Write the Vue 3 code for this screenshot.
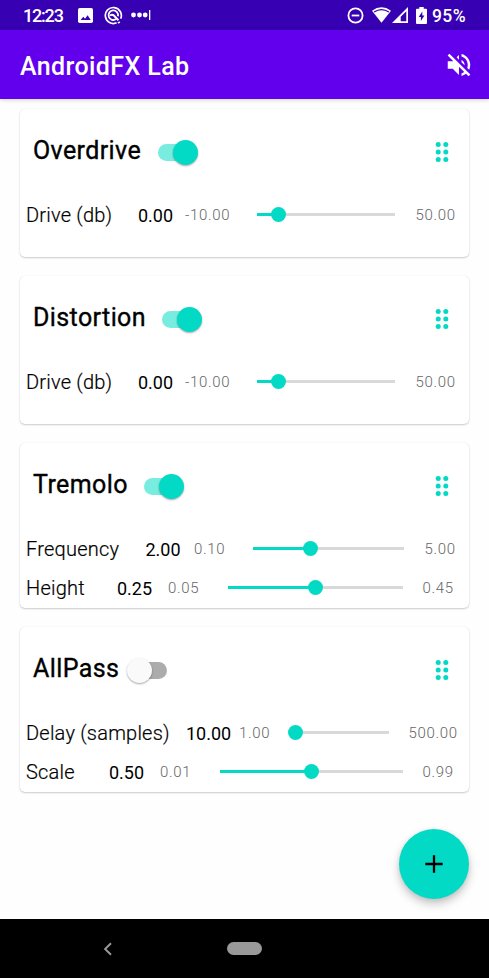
<script setup>
import { reactive } from 'vue'

const effects = reactive([
  {
    name: 'Overdrive', on: true,
    params: [{ label: 'Drive (db)', value: '0.00', min: '-10.00', max: '50.00', cols: [118, 47, 72, 138, 20.5], fill: 15.8 }]
  },
  {
    name: 'Distortion', on: true,
    params: [{ label: 'Drive (db)', value: '0.00', min: '-10.00', max: '50.00', cols: [118, 47, 72, 138, 20.5], fill: 15.8 }]
  },
  {
    name: 'Tremolo', on: true,
    params: [
      { label: 'Frequency', value: '2.00', min: '0.10', max: '5.00', cols: [125.5, 48.5, 59, 151, 20.5], fill: 37.8 },
      { label: 'Height', value: '0.25', min: '0.05', max: '0.45', cols: [97, 51, 60, 174.5, 20], fill: 50 }
    ]
  },
  {
    name: 'AllPass', on: false,
    params: [
      { label: 'Delay (samples)', value: '10.00', min: '1.00', max: '500.00', cols: [166, 53, 56.5, 93, 20], fill: 0 },
      { label: 'Scale', value: '0.50', min: '0.01', max: '0.99', cols: [89, 51, 60, 182.5, 20], fill: 50 }
    ]
  }
])

const dots = [4.5, 12, 19.5]

function columns(p) {
  return p.cols.map((c) => c + 'px').join(' ') + ' 1fr'
}
</script>

<template>
  <div class="screen">
    <div class="status">
      <span class="clock">12:23</span>
      <svg class="picture" width="15" height="15" viewBox="0 0 15 15">
        <rect width="15" height="15" rx="1.8" fill="#fff" />
        <path d="M2.6 12 5.3 8.7 7 10.8 9.6 7.3 12.8 12Z" fill="#3700b3" />
      </svg>
      <svg class="round-logo" width="19" height="19" viewBox="0 0 19 19" fill="none" stroke="#fff">
        <path d="M16.7 12.6A8 8 0 1 0 12.6 16.8" stroke-width="1.7" />
        <path d="M12.1 13.1A4.8 4.8 0 1 1 14 10.2" stroke-width="1.8" />
        <path d="M6 9.8C7 8.2 8.9 8.5 9.9 9.5L14.4 14.2" stroke-width="2" />
        <path d="M14 17.2 15.8 15.8" stroke-width="1.6" />
      </svg>
      <svg class="more" width="20" height="12" viewBox="0 0 20 12" fill="#fff">
        <circle cx="2.5" cy="6" r="2.4" /><circle cx="8.5" cy="6" r="2.4" /><circle cx="14.2" cy="6" r="2.4" />
        <rect x="18" y="1" width="1.3" height="10" />
      </svg>
      <span class="spacer"></span>
      <svg class="dnd" width="17" height="17" viewBox="0 0 17 17" fill="none" stroke="#fff" stroke-width="1.8">
        <circle cx="8.5" cy="8.5" r="7.1" /><path d="M4.7 8.5h7.6" />
      </svg>
      <svg class="wifi" width="19" height="16" viewBox="0 0 19 16">
        <path d="M0 3.7Q9.5-3.2 19 3.7L9.5 15.8Z" fill="#fff" />
        <path d="M2.1 5.1Q9.5 0 16.9 5.1" fill="none" stroke="#3700b3" stroke-width="1.2" />
      </svg>
      <svg class="signal" width="16" height="16" viewBox="0 0 16 16">
        <path d="M16 0V16H0ZM14.3 4.2 8.7 9.8V14.3H14.3Z" fill="#fff" fill-rule="evenodd" />
      </svg>
      <svg class="battery" width="11" height="17" viewBox="0 0 11 17">
        <path d="M3.3 0h4.4v1.8H10a1 1 0 0 1 1 1V16a1 1 0 0 1-1 1H1a1 1 0 0 1-1-1V2.8a1 1 0 0 1 1-1h2.3Z" fill="#fff" />
        <path d="M6.3 4.5 2.7 10h2.2v4l3.5-5.4H6.3Z" fill="#3700b3" />
      </svg>
      <span class="percent">95%</span>
    </div>

    <header class="app-bar">
      <h1>AndroidFX Lab</h1>
      <svg width="30" height="30" viewBox="0 0 24 24" fill="#fff">
        <path d="M4.34 2.93 2.93 4.34 7.29 8.7 7 9H3v6h4l5 5v-6.59l4.18 4.18c-.65.49-1.38.88-2.18 1.11v2.06c1.34-.3 2.57-.92 3.61-1.75l2.05 2.05 1.41-1.41L4.34 2.93zM19 12c0 .82-.15 1.61-.41 2.34l1.53 1.53c.56-1.17.88-2.48.88-3.87 0-4.28-2.99-7.86-7-8.77v2.06c2.89.86 5 3.54 5 6.71zM12 4l-1.88 1.88L12 7.76V4zm4.5 8c0-1.77-1.02-3.29-2.5-4.03v1.79l2.48 2.48c.01-.08.02-.16.02-.24z" />
      </svg>
    </header>

    <main class="effects">
      <section v-for="fx in effects" :key="fx.name" class="card">
        <div class="card-head">
          <h2>{{ fx.name }}</h2>
          <button class="switch" :class="{ on: fx.on }" role="switch" :aria-checked="fx.on" @click="fx.on = !fx.on">
            <span class="groove"></span>
            <span class="knob"></span>
          </button>
          <svg class="handle" width="16" height="24" viewBox="0 0 16 24" fill="#03dac5">
            <template v-for="y in dots" :key="y">
              <circle cx="4.2" :cy="y" r="2.5" /><circle cx="11.8" :cy="y" r="2.5" />
            </template>
          </svg>
        </div>
        <div v-for="p in fx.params" :key="p.label" class="param" :style="{ gridTemplateColumns: columns(p) }">
          <span class="label">{{ p.label }}</span>
          <span class="value">{{ p.value }}</span>
          <span class="bound">{{ p.min }}</span>
          <div class="slider">
            <div class="progress" :style="{ width: p.fill + '%' }"></div>
            <div class="thumb"></div>
            <div class="rest"></div>
          </div>
          <span></span>
          <span class="bound">{{ p.max }}</span>
        </div>
      </section>
    </main>

    <div class="fab-row">
      <button class="fab" aria-label="Add">
        <svg width="18" height="18" viewBox="0 0 18 18" stroke="#000" stroke-width="2.3"><path d="M9 .3v17.4M.3 9h17.4" /></svg>
      </button>
    </div>

    <nav class="nav-bar">
      <svg class="back" width="10" height="14" viewBox="0 0 10 14" fill="none" stroke="#999" stroke-width="1.9"><path d="M8 1.3 2.1 7 8 12.7" /></svg>
      <span class="home"></span>
    </nav>
  </div>
</template>

<style>
body { margin: 0; background: #fff; }
</style>

<style scoped>
.screen {
  width: 489px;
  height: 978px;
  display: flex;
  flex-direction: column;
  overflow: hidden;
  background: #fefefe;
  font-family: Roboto, sans-serif;
  color: #000;
}
button { border: 0; padding: 0; }
svg { display: block; flex: none; }
.status {
  height: 30px;
  flex: none;
  display: flex;
  align-items: center;
  box-sizing: border-box;
  padding: 0 22px 0 23px;
  background: #3700b3;
  color: #fff;
}
.clock, .percent { font-size: 17.5px; font-weight: 500; line-height: 30px; padding-top: 2px; }
.clock { width: 55px; letter-spacing: -1.2px; font-size: 18px; }
.round-logo { margin-left: 11px; }
.more { margin-left: 8px; }
.spacer { flex: 1; }
.dnd { margin-right: 8px; }
.wifi { margin-right: 1px; }
.signal { margin-right: 8px; }
.battery { margin-right: 5px; }
.percent { width: 35px; white-space: nowrap; letter-spacing: .4px; }
.app-bar {
  height: 69px;
  flex: none;
  display: flex;
  align-items: center;
  justify-content: space-between;
  box-sizing: border-box;
  padding: 4px 15px 0 20px;
  background: #6200ee;
  color: #fff;
  box-shadow: 0 1px 4px rgba(0, 0, 0, .18);
}
.app-bar svg { margin-bottom: 3px; }
h1 { margin: 0; font-size: 25px; font-weight: 500; letter-spacing: .4px; }
.effects {
  display: flex;
  flex-direction: column;
  gap: 19px;
  padding: 10px 20px 0;
}
.card {
  height: 148px;
  box-sizing: border-box;
  border-radius: 5px;
  background: #fff;
  box-shadow: 0 1px 2px rgba(0, 0, 0, .2), 0 0 1px rgba(0, 0, 0, .1);
}
.card:nth-child(n + 3) { height: 165px; }
.card-head { display: flex; align-items: center; height: 86px; padding: 0 19.5px 0 13px; }
h2 { margin: 0 7.5px 3px 0; font-size: 25px; font-weight: 400; letter-spacing: .4px; -webkit-text-stroke: .35px #000; }
.switch { display: grid; width: 49px; height: 25px; align-items: center; background: none; }
.groove, .knob { grid-area: 1 / 1; }
.groove { width: 31px; height: 17px; justify-self: center; border-radius: 9px; background: #acacac; }
.knob { width: 25px; height: 25px; border-radius: 50%; background: #fafafa; box-shadow: 0 1px 2px rgba(0, 0, 0, .35); }
.on .groove { background: #79ece0; }
.on .knob { justify-self: end; background: #03dac5; }
.handle { margin-left: auto; }
.param { display: grid; align-items: center; height: 39px; }
.label { padding-left: 6px; }
.label, .value { font-size: 20px; line-height: 37px; padding-top: 2px; white-space: nowrap; }
.label { font-weight: 300; letter-spacing: .22px; -webkit-text-stroke: .2px #000; }
.value { font-size: 18px; }
.bound { font-size: 15px; font-weight: 300; color: #666; letter-spacing: .7px; white-space: nowrap; padding-top: 1px; }
.slider { display: flex; align-items: center; }
.progress, .rest { height: 2.5px; }
.progress { background: #03dac5; }
.rest { flex: 1; background: #d9d9d9; }
.thumb { width: 15px; height: 15px; margin: 0 -7.5px; border-radius: 50%; background: #03dac5; z-index: 1; }
.fab-row { display: flex; justify-content: flex-end; padding: 37px 20px 0 0; }
.fab {
  width: 70px;
  height: 70px;
  display: grid;
  place-items: center;
  border-radius: 50%;
  background: #03dac5;
  box-shadow: 0 5px 10px rgba(0, 0, 0, .22), 0 1px 4px rgba(0, 0, 0, .08);
}
.nav-bar {
  height: 59px;
  margin-top: auto;
  display: flex;
  align-items: center;
  background: #000;
}
.back { margin-left: 103px; }
.home { width: 35px; height: 13px; margin-left: 114px; border-radius: 7px; background: #999; }
</style>
